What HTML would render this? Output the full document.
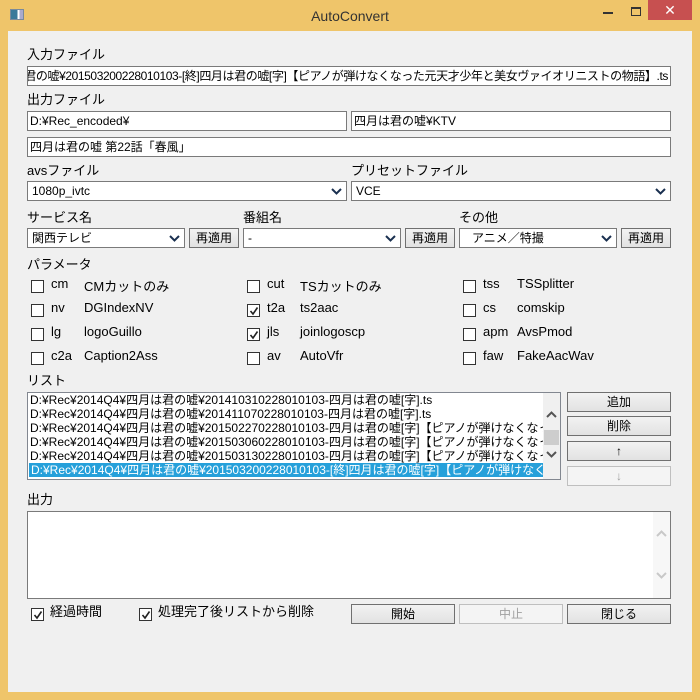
<!DOCTYPE html>
<html><head><meta charset="utf-8"><style>
*{box-sizing:border-box;margin:0;padding:0}
body{width:700px;height:700px;background:#EFC56A;position:relative;overflow:hidden;font-family:"Liberation Sans","Noto Sans CJK JP",sans-serif;font-size:12px;color:#000}
.a{position:absolute;white-space:nowrap}
#client{position:absolute;left:8px;top:31px;width:684px;height:661px;background:#F0F0F0}
.tb{position:absolute;background:#fff;border:1px solid #7A7A7A;height:20px;line-height:18px;padding-left:2px;overflow:hidden;white-space:nowrap}
.cb{position:absolute;background:#fff;border:1px solid #7A7A7A;height:20px;line-height:18px;padding-left:4px;overflow:hidden;white-space:nowrap}
.cb svg{position:absolute;right:4px;top:6px}
.bt{position:absolute;border:1px solid #707070;background:linear-gradient(#F2F2F2,#E2E2E2);height:20px;line-height:18px;text-align:center}
.bt.d{color:#A0A0A0;border-color:#BFBFBF;background:#F4F4F4}
.ck{position:absolute;width:13px;height:13px;border:1px solid #333;background:#fff}
.ck svg{position:absolute;left:1px;top:1px}
.lbl{position:absolute;white-space:nowrap;font-size:13px}
</style></head><body>
<div class="a" style="left:10px;top:9px;width:14px;height:11px;border:1px solid #7a8a9a;background:linear-gradient(90deg,#3a7a9a 0 55%,#fff 55% 70%,#aac 70%)"></div>
<div class="a" style="left:0;width:700px;top:8px;text-align:center;font-size:14px;color:#333">AutoConvert</div>
<div class="a" style="left:603px;top:12px;width:10px;height:2px;background:#333"></div>
<div class="a" style="left:631px;top:7px;width:10px;height:9px;border:1px solid #333;border-top-width:2px"></div>
<div class="a" style="left:648px;top:0;width:44px;height:20px;background:#C75050;color:#fff;text-align:center;font-size:14px;line-height:20px">✕</div>
<div id="client"></div>

<div class="lbl" style="left:27px;top:44px">入力ファイル</div>
<div class="tb" style="left:27px;top:66px;width:644px;display:flex;justify-content:flex-end;padding-right:2px"><span style="letter-spacing:-0.4px">D:¥Rec¥2014Q4¥四月は君の嘘¥201503200228010103-[終]四月は君の嘘[字]【ピアノが弾けなくなった元天才少年と美女ヴァイオリニストの物語】.ts</span></div>
<div class="lbl" style="left:27px;top:89px">出力ファイル</div>
<div class="tb" style="left:27px;top:111px;width:320px">D:¥Rec_encoded¥</div>
<div class="tb" style="left:351px;top:111px;width:320px">四月は君の嘘¥KTV</div>
<div class="tb" style="left:27px;top:137px;width:644px">四月は君の嘘 第22話「春風」</div>
<div class="lbl" style="left:27px;top:160px">avsファイル</div>
<div class="lbl" style="left:351px;top:160px">プリセットファイル</div>
<div class="cb" style="left:27px;top:181px;width:320px">1080p_ivtc<svg width="11" height="7"><path d="M1 1l4.5 4.5L10 1" stroke="#1a3050" stroke-width="2" fill="none"/></svg></div>
<div class="cb" style="left:351px;top:181px;width:320px">VCE<svg width="11" height="7"><path d="M1 1l4.5 4.5L10 1" stroke="#1a3050" stroke-width="2" fill="none"/></svg></div>

<div class="lbl" style="left:27px;top:207px">サービス名</div>
<div class="lbl" style="left:243px;top:207px">番組名</div>
<div class="lbl" style="left:459px;top:207px">その他</div>
<div class="cb" style="left:27px;top:228px;width:158px">関西テレビ<svg width="11" height="7"><path d="M1 1l4.5 4.5L10 1" stroke="#1a3050" stroke-width="2" fill="none"/></svg></div>
<div class="bt" style="left:189px;top:228px;width:50px">再適用</div>
<div class="cb" style="left:243px;top:228px;width:158px">-<svg width="11" height="7"><path d="M1 1l4.5 4.5L10 1" stroke="#1a3050" stroke-width="2" fill="none"/></svg></div>
<div class="bt" style="left:405px;top:228px;width:50px">再適用</div>
<div class="cb" style="left:459px;top:228px;width:158px;padding-left:12px">アニメ／特撮<svg width="11" height="7"><path d="M1 1l4.5 4.5L10 1" stroke="#1a3050" stroke-width="2" fill="none"/></svg></div>
<div class="bt" style="left:621px;top:228px;width:50px">再適用</div>

<div class="lbl" style="left:27px;top:254px">パラメータ</div>
<div class="ck" style="left:31px;top:280px"></div><div class="lbl" style="left:51px;top:276px">cm</div><div class="lbl" style="left:84px;top:276px">CMカットのみ</div>
<div class="ck" style="left:31px;top:304px"></div><div class="lbl" style="left:51px;top:300px">nv</div><div class="lbl" style="left:84px;top:300px">DGIndexNV</div>
<div class="ck" style="left:31px;top:328px"></div><div class="lbl" style="left:51px;top:324px">lg</div><div class="lbl" style="left:84px;top:324px">logoGuillo</div>
<div class="ck" style="left:31px;top:352px"></div><div class="lbl" style="left:51px;top:348px">c2a</div><div class="lbl" style="left:84px;top:348px">Caption2Ass</div>
<div class="ck" style="left:247px;top:280px"></div><div class="lbl" style="left:267px;top:276px">cut</div><div class="lbl" style="left:300px;top:276px">TSカットのみ</div>
<div class="ck" style="left:247px;top:304px"><svg width="10" height="10"><path d="M1.5 5l2.5 3L8.5 1.5" stroke="#222" stroke-width="1.6" fill="none"/></svg></div><div class="lbl" style="left:267px;top:300px">t2a</div><div class="lbl" style="left:300px;top:300px">ts2aac</div>
<div class="ck" style="left:247px;top:328px"><svg width="10" height="10"><path d="M1.5 5l2.5 3L8.5 1.5" stroke="#222" stroke-width="1.6" fill="none"/></svg></div><div class="lbl" style="left:267px;top:324px">jls</div><div class="lbl" style="left:300px;top:324px">joinlogoscp</div>
<div class="ck" style="left:247px;top:352px"></div><div class="lbl" style="left:267px;top:348px">av</div><div class="lbl" style="left:300px;top:348px">AutoVfr</div>
<div class="ck" style="left:463px;top:280px"></div><div class="lbl" style="left:483px;top:276px">tss</div><div class="lbl" style="left:517px;top:276px">TSSplitter</div>
<div class="ck" style="left:463px;top:304px"></div><div class="lbl" style="left:483px;top:300px">cs</div><div class="lbl" style="left:517px;top:300px">comskip</div>
<div class="ck" style="left:463px;top:328px"></div><div class="lbl" style="left:483px;top:324px">apm</div><div class="lbl" style="left:517px;top:324px">AvsPmod</div>
<div class="ck" style="left:463px;top:352px"></div><div class="lbl" style="left:483px;top:348px">faw</div><div class="lbl" style="left:517px;top:348px">FakeAacWav</div>

<div class="lbl" style="left:27px;top:370px">リスト</div>
<div class="a" style="left:27px;top:392px;width:534px;height:88px;background:#fff;border:1px solid #828790;overflow:hidden;line-height:14px">
<div style="padding-left:2px;height:14px;width:516px;overflow:hidden">D:¥Rec¥2014Q4¥四月は君の嘘¥201410310228010103-四月は君の嘘[字].ts</div>
<div style="padding-left:2px;height:14px;width:516px;overflow:hidden">D:¥Rec¥2014Q4¥四月は君の嘘¥201411070228010103-四月は君の嘘[字].ts</div>
<div style="padding-left:2px;height:14px;width:516px;overflow:hidden">D:¥Rec¥2014Q4¥四月は君の嘘¥201502270228010103-四月は君の嘘[字]【ピアノが弾けなくなった</div>
<div style="padding-left:2px;height:14px;width:516px;overflow:hidden">D:¥Rec¥2014Q4¥四月は君の嘘¥201503060228010103-四月は君の嘘[字]【ピアノが弾けなくなった</div>
<div style="padding-left:2px;height:14px;width:516px;overflow:hidden">D:¥Rec¥2014Q4¥四月は君の嘘¥201503130228010103-四月は君の嘘[字]【ピアノが弾けなくなった</div>
<div style="padding-left:2px;height:14px;width:514px;overflow:hidden;background:#26A0DA;color:#fff;margin-left:1px">D:¥Rec¥2014Q4¥四月は君の嘘¥201503200228010103-[終]四月は君の嘘[字]【ピアノが弾けなくなった</div>
<div style="position:absolute;right:0;top:0;width:17px;height:86px;background:#F0F0F0"></div>
<svg style="position:absolute;right:3px;top:18px" width="11" height="7"><path d="M1 6l4.5-4.5L10 6" stroke="#555" stroke-width="2" fill="none"/></svg>
<div style="position:absolute;right:1px;top:37px;width:15px;height:15px;background:#CDCDCD"></div>
<svg style="position:absolute;right:3px;top:58px" width="11" height="7"><path d="M1 1l4.5 4.5L10 1" stroke="#555" stroke-width="2" fill="none"/></svg>
</div>
<div class="bt" style="left:567px;top:392px;width:104px">追加</div>
<div class="bt" style="left:567px;top:416px;width:104px">削除</div>
<div class="bt" style="left:567px;top:441px;width:104px">↑</div>
<div class="bt d" style="left:567px;top:466px;width:104px">↓</div>

<div class="lbl" style="left:27px;top:489px">出力</div>
<div class="a" style="left:27px;top:511px;width:644px;height:88px;background:#fff;border:1px solid #7A7A7A">
<div style="position:absolute;right:0;top:0;width:17px;height:86px;background:#F7F7F7"></div>
<svg style="position:absolute;right:3px;top:18px" width="11" height="7"><path d="M1 6l4.5-4.5L10 6" stroke="#C8C8C8" stroke-width="2" fill="none"/></svg>
<svg style="position:absolute;right:3px;top:60px" width="11" height="7"><path d="M1 1l4.5 4.5L10 1" stroke="#C8C8C8" stroke-width="2" fill="none"/></svg>
</div>
<div class="ck" style="left:31px;top:608px"><svg width="10" height="10"><path d="M1.5 5l2.5 3L8.5 1.5" stroke="#222" stroke-width="1.6" fill="none"/></svg></div><div class="lbl" style="left:50px;top:601px">経過時間</div>
<div class="ck" style="left:139px;top:608px"><svg width="10" height="10"><path d="M1.5 5l2.5 3L8.5 1.5" stroke="#222" stroke-width="1.6" fill="none"/></svg></div><div class="lbl" style="left:158px;top:601px">処理完了後リストから削除</div>
<div class="bt" style="left:351px;top:604px;width:104px">開始</div>
<div class="bt d" style="left:459px;top:604px;width:104px">中止</div>
<div class="bt" style="left:567px;top:604px;width:104px">閉じる</div>
</body></html>
